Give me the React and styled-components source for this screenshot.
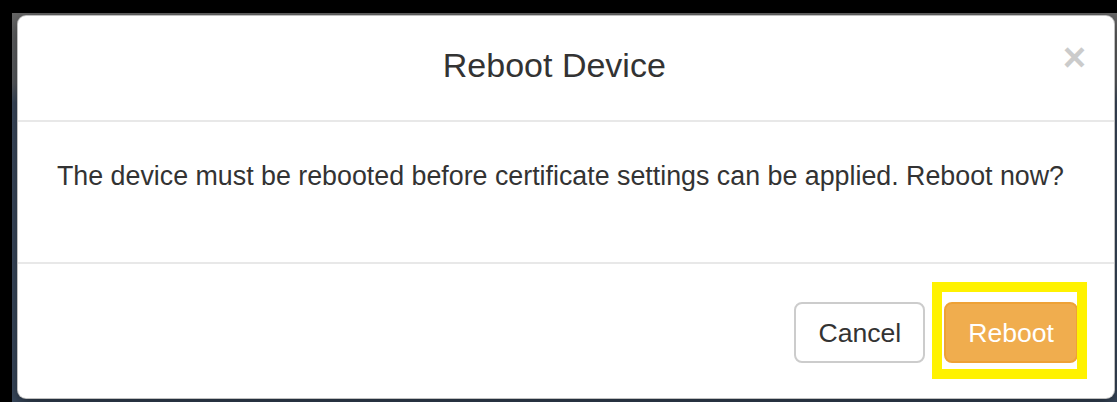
import React from "react";
import styled, { createGlobalStyle } from "styled-components";

const GlobalStyle = createGlobalStyle`
  html, body {
    margin: 0;
    padding: 0;
    background: #000;
    overflow: hidden;
  }
  body {
    font-family: "Liberation Sans", Arial, Helvetica, sans-serif;
    color: #333;
  }
`;

const Screen = styled.div`
  width: 1117px;
  height: 402px;
  padding: 13px 0 0 12px;
  box-sizing: border-box;
`;

const Backdrop = styled.div`
  height: 100%;
  padding: 2px 0 0 5px;
  box-sizing: border-box;
  background: linear-gradient(to bottom, #676767 0, #5c5f63 70px, #3d4c61 90px, #3a4a5f 100%);
`;

const Modal = styled.div`
  width: 1098px;
  height: 384px;
  box-sizing: border-box;
  background: #fff;
  border: 1px solid rgba(0, 0, 0, 0.25);
  border-radius: 9px;
  box-shadow: 0 5px 15px rgba(0, 0, 0, 0.5);
  display: flex;
  flex-direction: column;
  overflow: hidden;
`;

const Header = styled.div`
  display: flex;
  align-items: flex-start;
  padding: 25px 28px 31px;
  border-bottom: 2px solid #e8e8e8;
`;

const Title = styled.h4`
  flex: 1;
  margin: 0;
  font-size: 34px;
  font-weight: normal;
  line-height: 48px;
  text-align: center;
  color: #333;
`;

const Close = styled.button`
  margin-top: -4px;
  padding: 0;
  border: 0;
  background: transparent;
  font-family: inherit;
  font-size: 40px;
  font-weight: bold;
  line-height: 40px;
  color: #000;
  opacity: 0.2;
  text-shadow: 0 1px 0 #fff;
  cursor: pointer;
`;

const Body = styled.div`
  padding: 35px 39px 67px;
  font-size: 26.8px;
  line-height: 38px;
  color: #333;
`;

const Footer = styled.div`
  flex: 1;
  display: flex;
  justify-content: flex-end;
  align-items: flex-start;
  gap: 19px;
  padding: 38px 36px 0;
  border-top: 2px solid #e8e8e8;
`;

const Slot = styled.div`
  position: relative;
`;

const Button = styled.button`
  height: 61px;
  padding: 0 22px;
  box-sizing: border-box;
  font-family: inherit;
  font-size: 26.6px;
  line-height: 38px;
  border-radius: 8px;
  border: 2px solid ${(p) => (p.$warning ? "#eea236" : "#cccccc")};
  background: ${(p) => (p.$warning ? "#f0ad4e" : "#fff")};
  color: ${(p) => (p.$warning ? "#fff" : "#333")};
  cursor: pointer;
`;

// yellow callout frame drawn around the confirm action
const Highlight = styled.span`
  position: absolute;
  top: -20px;
  left: -12px;
  right: -9px;
  bottom: -16px;
  border: 10px solid #fff200;
  pointer-events: none;
`;

export default function App() {
  return (
    <>
      <GlobalStyle />
      <Screen>
        <Backdrop>
          <Modal>
            <Header>
              <Title>Reboot Device</Title>
              <Close aria-label="Close">×</Close>
            </Header>
            <Body>
              The device must be rebooted before certificate settings can be
              applied. Reboot now?
            </Body>
            <Footer>
              <Slot>
                <Button>Cancel</Button>
              </Slot>
              <Slot>
                <Button $warning>Reboot</Button>
                <Highlight />
              </Slot>
            </Footer>
          </Modal>
        </Backdrop>
      </Screen>
    </>
  );
}
